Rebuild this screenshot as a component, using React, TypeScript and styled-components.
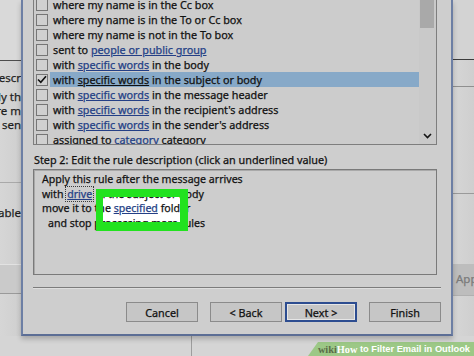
import React from "react";
import styled, { createGlobalStyle } from "styled-components";

const Global = createGlobalStyle`
  html, body { margin: 0; padding: 0; background: #d4d4d4; }
  body { font-family: "Noto Sans", "Open Sans", sans-serif; }
`;

const Page = styled.div`
  width: 474px;
  height: 356px;
  overflow: hidden;
  display: grid;
  grid-template-columns: 21px 432px 21px;
  grid-template-rows: 336px 20px;
  background: #d4d4d4;
  color: #111111;
  font-size: 10.8px;
  -webkit-text-stroke: 0.25px currentColor;
`;

/* ---------- background window, sides ---------- */
const SidePane = styled.div`
  display: flex;
  flex-direction: column;
  overflow: hidden;
  background: linear-gradient(90deg, #d6d6d6, #cfcfcf);
`;

const SideBlock = styled.div<{ $h: number; $line?: string; $bg?: string }>`
  flex: 0 0 ${(p) => p.$h}px;
  background: ${(p) => p.$bg ?? "transparent"};
  border-bottom: 1px solid ${(p) => p.$line ?? "transparent"};
  display: flex;
  flex-direction: column;
`;

const ClipText = styled.div<{ $top?: number; $color?: string; $align?: string }>`
  display: flex;
  justify-content: ${(p) => p.$align ?? "flex-end"};
  white-space: nowrap;
  height: 14px;
  line-height: 14px;
  font-size: 11.5px;
  margin-top: ${(p) => p.$top ?? 0}px;
  color: ${(p) => p.$color ?? "#1f1f1f"};
`;

/* ---------- dialog ---------- */
const Dialog = styled.div`
  display: flex;
  flex-direction: column;
  background: #cecece;
  border-left: 2px solid #6d7fa4;
  border-right: 2px solid #6d7fa4;
  border-bottom: 2px solid #5c6e95;
  box-shadow: 0 3px 5px rgba(0, 0, 0, 0.22);
  padding: 0 10px 0 10px;
  position: relative;
  z-index: 1;
`;

const ListBox = styled.div`
  height: 145px;
  box-sizing: border-box;
  margin-right: 4px;
  display: flex;
  border-left: 1px solid #7e7e7e;
  border-right: 1px solid #7e7e7e;
  border-bottom: 1px solid #7e7e7e;
  background: #cccccc;
  overflow: hidden;
`;

const Rows = styled.div`
  flex: 1;
  display: flex;
  flex-direction: column;
  margin-top: -3px;
  min-width: 0;
`;

const Row = styled.div`
  flex: 0 0 14.7px;
  display: flex;
  align-items: center;
  padding-left: 2px;
`;

const CheckBox = styled.span`
  flex: 0 0 12px;
  height: 12px;
  box-sizing: border-box;
  border: 1px solid #767676;
  background: #d0d0d0;
  display: flex;
  align-items: center;
  justify-content: center;
`;

const RowLabel = styled.span<{ $selected?: boolean }>`
  flex: 1;
  margin-left: 2px;
  padding-left: 3px;
  height: 15px;
  line-height: 15px;
  white-space: nowrap;
  background: ${(p) => (p.$selected ? "#87a9c8" : "transparent")};
`;

const Link = styled.span<{ $plain?: boolean }>`
  color: ${(p) => (p.$plain ? "inherit" : "#243f86")};
  text-decoration: underline;
  text-underline-offset: 1px;
`;

const ScrollBar = styled.div`
  flex: 0 0 17px;
  display: flex;
  flex-direction: column;
  justify-content: space-between;
  background: #c9c9c9;
  padding-left: 1px;
  box-sizing: border-box;
`;

const Thumb = styled.div`
  width: 14px;
  height: 28px;
  background: #a9a9a9;
`;

const ArrowBox = styled.div`
  height: 16px;
  display: flex;
  align-items: center;
  justify-content: center;
  padding-right: 2px;
`;

const StepLabel = styled.div`
  margin-top: 8px;
  height: 14px;
  line-height: 14px;
  white-space: nowrap;
  padding-left: 1px;
`;

const DescBox = styled.div`
  position: relative;
  margin-top: 2px;
  margin-right: 4px;
  height: 106px;
  box-sizing: border-box;
  border: 1px solid #7a7a7a;
  box-shadow: inset 1px 1px 0 #a9a9a9;
  background: #cdcdcd;
  padding: 2px 0 0 8px;
  font-size: 10.6px;
`;

const DescLine = styled.div<{ $indent?: number }>`
  position: relative;
  z-index: 1;
  height: 14.7px;
  line-height: 14.7px;
  white-space: nowrap;
  padding-left: ${(p) => p.$indent ?? 0}px;
`;

const FocusValue = styled.span`
  outline: 1px dotted #3a3a3a;
  outline-offset: 0px;
  padding: 0 1px;
`;

const HighlightFill = styled.div`
  position: absolute;
  left: 62px;
  top: 19px;
  width: 92px;
  height: 42px;
  background: #ffffff;
  z-index: 0;
`;

const HighlightFrame = styled.div`
  position: absolute;
  left: 62px;
  top: 19px;
  width: 92px;
  height: 42px;
  box-sizing: border-box;
  border-style: solid;
  border-color: #22e21f;
  border-width: 8px 8px 9px 7px;
  z-index: 2;
`;

const Separator = styled.div`
  margin-top: 12px;
  height: 1px;
  background: #7c7c7c;
  border-bottom: 1px solid #dedede;
`;

const ButtonRow = styled.div`
  margin-top: 13px;
  display: flex;
  justify-content: flex-end;
  gap: 12px;
`;

const Pair = styled.div`
  display: flex;
  gap: 3px;
`;

const Button = styled.div<{ $focused?: boolean }>`
  width: 72px;
  height: 20px;
  box-sizing: border-box;
  display: flex;
  align-items: center;
  justify-content: center;
  background: #c6c6c6;
  border: ${(p) => (p.$focused ? "2px solid #2d4d90" : "1px solid #8b8b8b")};
  box-shadow: ${(p) => (p.$focused ? "inset 0 0 0 1px #e6e6e6" : "none")};
`;

/* ---------- bottom strip ---------- */
const BottomStrip = styled.div`
  grid-column: 1 / span 3;
  position: relative;
  display: flex;
  background: #d5d5d5;
`;

const VLine = styled.div`
  margin-left: 191px;
  width: 1px;
  background: #9d9d9d;
`;

const Watermark = styled.div`
  position: absolute;
  right: 0;
  bottom: 0;
  width: 166px;
  height: 14px;
  background: #9cc886;
  clip-path: polygon(10px 0, 100% 0, 100% 100%, 0 100%);
  display: flex;
  align-items: center;
  justify-content: flex-end;
  padding-right: 4px;
  box-sizing: border-box;
  font-family: "Liberation Sans", Arial, sans-serif;
  font-weight: bold;
  font-size: 9.3px;
  color: #ffffff;
  white-space: nowrap;
  -webkit-text-stroke: 0;
`;

const WikiSerif = styled.span<{ $dark?: boolean }>`
  font-family: "Liberation Serif", "DejaVu Serif", serif;
  font-size: 10.3px;
  color: ${(p) => (p.$dark ? "#5b6c48" : "#ffffff")};
`;

const rows: { parts: (string | { link: string })[]; checked?: boolean }[] = [
  { parts: ["where my name is in the Cc box"] },
  { parts: ["where my name is in the To or Cc box"] },
  { parts: ["where my name is not in the To box"] },
  { parts: ["sent to ", { link: "people or public group" }] },
  { parts: ["with ", { link: "specific words" }, " in the body"] },
  { parts: ["with ", { link: "specific words" }, " in the subject or body"], checked: true },
  { parts: ["with ", { link: "specific words" }, " in the message header"] },
  { parts: ["with ", { link: "specific words" }, " in the recipient's address"] },
  { parts: ["with ", { link: "specific words" }, " in the sender's address"] },
  { parts: ["assigned to ", { link: "category" }, " category"] },
];

const Check = () => (
  <svg width="10" height="9" viewBox="0 0 10 9">
    <path d="M1 4.5 L3.8 7.3 L9 1.2" fill="none" stroke="#111" strokeWidth="1.6" />
  </svg>
);

const Chevron = () => (
  <svg width="9" height="6" viewBox="0 0 9 6">
    <path d="M1 1 L4.5 4.5 L8 1" fill="none" stroke="#151515" strokeWidth="1.6" />
  </svg>
);

export default function App() {
  return (
    <>
      <Global />
      <Page>
        <SidePane>
          <SideBlock $h={60} $line="#4d4d4d" $bg="#d9d9d9" />
          <SideBlock $h={121} $line="#a9a9a9">
            <ClipText $top={10}>Step 2: Edit the rule descr</ClipText>
            <ClipText $top={5}>Apply th</ClipText>
            <ClipText>where m</ClipText>
            <ClipText>- sen</ClipText>
          </SideBlock>
          <SideBlock $h={81} $line="#e2e2e2">
            <ClipText $top={23}>Enable</ClipText>
          </SideBlock>
          <SideBlock $h={28} $line="#9a9a9a" $bg="#cacaca" />
          <SideBlock $h={44} />
        </SidePane>

        <Dialog>
          <ListBox>
            <Rows>
              {rows.map((r, i) => (
                <Row key={i}>
                  <CheckBox>{r.checked ? <Check /> : null}</CheckBox>
                  <RowLabel $selected={r.checked}>
                    {r.parts.map((p, j) =>
                      typeof p === "string" ? (
                        <React.Fragment key={j}>{p}</React.Fragment>
                      ) : (
                        <Link key={j} $plain={r.checked}>
                          {p.link}
                        </Link>
                      )
                    )}
                  </RowLabel>
                </Row>
              ))}
            </Rows>
            <ScrollBar>
              <Thumb />
              <ArrowBox>
                <Chevron />
              </ArrowBox>
            </ScrollBar>
          </ListBox>

          <StepLabel>Step 2: Edit the rule description (click an underlined value)</StepLabel>

          <DescBox>
            <HighlightFill />
            <DescLine>Apply this rule after the message arrives</DescLine>
            <DescLine>
              with <FocusValue><Link>drive</Link></FocusValue> in the subject or body
            </DescLine>
            <DescLine>
              move it to the <Link>specified</Link> folder
            </DescLine>
            <DescLine $indent={6}>and stop processing more rules</DescLine>
            <HighlightFrame />
          </DescBox>

          <Separator />

          <ButtonRow>
            <Button>Cancel</Button>
            <Pair>
              <Button>&lt; Back</Button>
              <Button $focused>Next &gt;</Button>
            </Pair>
            <Button>Finish</Button>
          </ButtonRow>
        </Dialog>

        <SidePane>
          <SideBlock $h={59} $line="#3c3c3c" $bg="#d3d3d3" />
          <SideBlock $h={26} $line="#8f8f8f" />
          <SideBlock $h={106} $line="#9a9a9a" />
          <SideBlock $h={69} />
          <SideBlock $h={31} $line="#b0b0b0" $bg="#bdbdbd">
            <ClipText $top={8} $color="#7a7a7a" $align="flex-start">&nbsp;Apply</ClipText>
          </SideBlock>
          <SideBlock $h={40} />
        </SidePane>

        <BottomStrip>
          <VLine />
          <Watermark>
            <WikiSerif $dark>wiki</WikiSerif>
            <WikiSerif>How</WikiSerif>
            &nbsp;to Filter Email in Outlook
          </Watermark>
        </BottomStrip>
      </Page>
    </>
  );
}
